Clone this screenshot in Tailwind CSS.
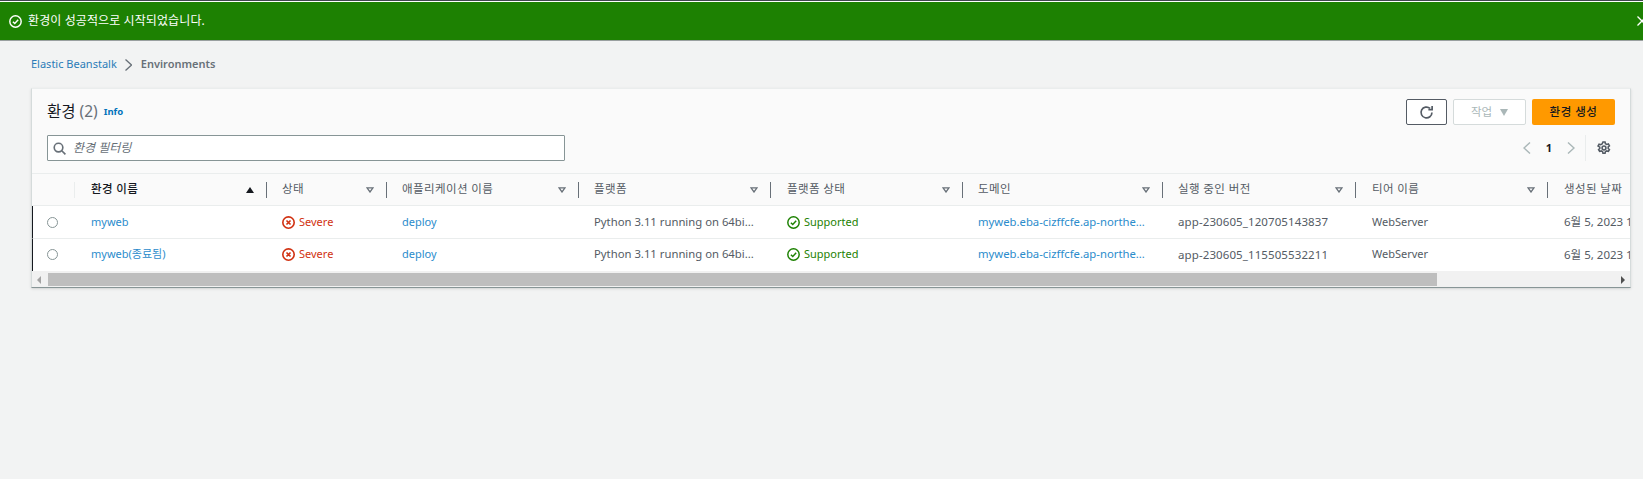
<!doctype html>
<html lang="ko">
  <head>
    <meta charset="UTF-8" />
    <title>Environments</title>
    <script src="https://cdn.jsdelivr.net/npm/@tailwindcss/browser@4"></script>
  </head>
  <body class="h-[479px] overflow-hidden bg-[#f2f3f3] font-['Noto_Sans','Noto_Sans_CJK_KR',sans-serif] text-[12px] text-[#545b64]">
    <div class="h-px bg-[#414750]"></div>
    <div class="h-px bg-white"></div>
    <div class="flex h-[39px] items-center justify-between overflow-hidden border-b border-[#9aa0a0] bg-[#1d8102] pl-[9px] text-white">
      <div class="flex items-center gap-[6px]">
        <svg class="h-[13px] w-[13px]" viewBox="0 0 16 16" fill="none" stroke="white" stroke-width="1.8"><circle cx="8" cy="8" r="7"/><path d="M4.8 8.2l2.3 2.3 4.2-4.6"/></svg>
        <span class="text-[12px] tracking-[0.1px]">환경이 성공적으로 시작되었습니다.</span>
      </div>
      <svg class="-mr-[4px] h-[10px] w-[10px] shrink-0" viewBox="0 0 10 10" fill="none" stroke="white" stroke-width="1.3"><path d="M0.5 0.5l9 9m0-9l-9 9"/></svg>
    </div>

    <nav class="flex h-[47px] items-center pl-[31px] text-[11px]">
      <a class="text-[#2b7cb8]">Elastic Beanstalk</a>
      <svg class="ml-[8px] mr-[9px] h-[12px] w-[7px]" viewBox="0 0 7 12" fill="none" stroke="#687078" stroke-width="1.3"><path d="M0.5 0.5l6 5.5-6 5.5"/></svg>
      <span class="font-semibold text-[#687078]">Environments</span>
    </nav>

    <section class="ml-[31px] mr-[12px] overflow-hidden border border-t-[#eaeded] border-r-[#d5dbdb] border-b-[#879596] border-l-[#d5dbdb] bg-[#fafafa] shadow-sm">
      <header class="relative h-[85px] border-b border-[#eaeded]">
        <div class="flex justify-between pl-[15px] pr-[15px] pt-[10px]">
          <div class="flex h-[26px] items-center gap-[6px]">
            <h1 class="text-[15.5px] text-[#16191f]">환경 <span class="text-[#687078]">(2)</span></h1>
            <a class="text-[9.5px] font-bold text-[#0073bb]">Info</a>
          </div>
          <div class="flex gap-[6px]">
            <button class="flex h-[26px] w-[41px] items-center justify-center rounded-[2px] border border-[#545b64] bg-white">
              <svg class="h-[15px] w-[15px]" viewBox="0 0 16 16" fill="none" stroke="#545b64" stroke-width="1.8"><path d="M13.8 8a5.8 5.8 0 1 1-2-4.4"/><path d="M14 1v4h-4"/></svg>
            </button>
            <button class="flex h-[26px] w-[73px] items-center justify-center gap-[8px] rounded-[2px] border border-[#d5dbdb] bg-white text-[11.5px] text-[#aab7b8]">
              작업
              <span class="h-0 w-0 border-x-[4.5px] border-t-[7px] border-x-transparent border-t-[#aab7b8]"></span>
            </button>
            <button class="h-[26px] w-[83px] rounded-[2px] bg-[#ff9900] text-[11.5px] font-medium tracking-[0.5px] text-[#16191f]">환경 생성</button>
          </div>
        </div>
        <div class="flex items-center justify-between pl-[15px] pr-[14px] pt-[10px]">
          <label class="flex h-[26px] w-[518px] items-center gap-[7px] rounded-[1px] border border-[#879596] bg-white pl-[5px]">
            <svg class="h-[13px] w-[13px]" viewBox="0 0 16 16" fill="none" stroke="#687078" stroke-width="2"><circle cx="6.8" cy="6.8" r="5.3"/><path d="M10.8 10.8l4.5 4.5"/></svg>
            <span class="text-[12px] italic text-[#687078]">환경 필터링</span>
          </label>
          <div class="flex h-[26px] items-center">
            <svg class="h-[12px] w-[8px]" viewBox="0 0 8 12" fill="none" stroke="#aab7b8" stroke-width="1.4"><path d="M7 0.5L1 6l6 5.5"/></svg>
            <span class="w-[36px] text-center text-[11px] font-bold text-[#16191f]">1</span>
            <svg class="h-[12px] w-[8px]" viewBox="0 0 8 12" fill="none" stroke="#aab7b8" stroke-width="1.4"><path d="M1 0.5L7 6l-6 5.5"/></svg>
            <div class="ml-[10px] h-[26px] border-l border-[#eaeded]"></div>
            <svg class="ml-[11px] mr-[5px] h-[14px] w-[14px]" viewBox="0 0 16 16" fill="none" stroke="#545b64" stroke-width="1.8"><circle cx="8" cy="8" r="2.2"/><path d="M6.8 1.2h2.4l.4 1.8 1.6.9 1.8-.6 1.2 2.1-1.4 1.3v1.8l1.4 1.3-1.2 2.1-1.8-.6-1.6.9-.4 1.8H6.8l-.4-1.8-1.6-.9-1.8.6-1.2-2.1 1.4-1.3V7.1L1.2 5.8l1.2-2.1 1.8.6 1.6-.9z"/></svg>
          </div>
        </div>
      </header>

      <div class="grid h-[32px] grid-cols-[42px_192px_120px_192px_192px_192px_200px_193px_192px_83px] items-center border-b border-l border-b-[#eaeded] border-l-transparent text-[11.5px] tracking-[0.4px]">
        <div class="h-[16px] border-r border-[#eaeded]"></div>
        <div class="flex h-[16px] items-center justify-between border-r border-[#687078] pb-[2px] pl-[16px] pr-[12px] font-medium text-[#16191f]">환경 이름<span class="mt-[2px] h-0 w-0 border-x-[4.5px] border-b-[6px] border-x-transparent border-b-[#16191f]"></span></div>
        <div class="flex h-[16px] items-center justify-between border-r border-[#687078] pb-[2px] pl-[15px] pr-[12px]">상태<svg class="mt-[2px] h-[6px] w-[8px]" viewBox="0 0 8 6" fill="none" stroke="#687078" stroke-width="1.3"><path d="M1 0.8h6L4 5z"/></svg></div>
        <div class="flex h-[16px] items-center justify-between border-r border-[#687078] pb-[2px] pl-[15px] pr-[12px]">애플리케이션 이름<svg class="mt-[2px] h-[6px] w-[8px]" viewBox="0 0 8 6" fill="none" stroke="#687078" stroke-width="1.3"><path d="M1 0.8h6L4 5z"/></svg></div>
        <div class="flex h-[16px] items-center justify-between border-r border-[#687078] pb-[2px] pl-[15px] pr-[12px]">플랫폼<svg class="mt-[2px] h-[6px] w-[8px]" viewBox="0 0 8 6" fill="none" stroke="#687078" stroke-width="1.3"><path d="M1 0.8h6L4 5z"/></svg></div>
        <div class="flex h-[16px] items-center justify-between border-r border-[#687078] pb-[2px] pl-[16px] pr-[12px]">플랫폼 상태<svg class="mt-[2px] h-[6px] w-[8px]" viewBox="0 0 8 6" fill="none" stroke="#687078" stroke-width="1.3"><path d="M1 0.8h6L4 5z"/></svg></div>
        <div class="flex h-[16px] items-center justify-between border-r border-[#687078] pb-[2px] pl-[15px] pr-[12px]">도메인<svg class="mt-[2px] h-[6px] w-[8px]" viewBox="0 0 8 6" fill="none" stroke="#687078" stroke-width="1.3"><path d="M1 0.8h6L4 5z"/></svg></div>
        <div class="flex h-[16px] items-center justify-between border-r border-[#687078] pb-[2px] pl-[15px] pr-[12px]">실행 중인 버전<svg class="mt-[2px] h-[6px] w-[8px]" viewBox="0 0 8 6" fill="none" stroke="#687078" stroke-width="1.3"><path d="M1 0.8h6L4 5z"/></svg></div>
        <div class="flex h-[16px] items-center justify-between border-r border-[#687078] pb-[2px] pl-[16px] pr-[12px]">티어 이름<svg class="mt-[2px] h-[6px] w-[8px]" viewBox="0 0 8 6" fill="none" stroke="#687078" stroke-width="1.3"><path d="M1 0.8h6L4 5z"/></svg></div>
        <div class="whitespace-nowrap pb-[2px] pl-[16px]">생성된 날짜</div>
      </div>

      <div class="grid h-[33px] grid-cols-[42px_192px_120px_192px_192px_192px_200px_193px_192px_83px] items-center border-b border-l border-b-[#eaeded] border-l-[#16191f] bg-white text-[11px]">
        <div class="pl-[14px]"><span class="block h-[11px] w-[11px] rounded-full border border-[#879596]"></span></div>
        <a class="pl-[16px] text-[#2b8ccc]">myweb</a>
        <div class="flex items-center gap-[4px] pl-[15px] text-[#d13212]"><svg class="h-[13px] w-[13px]" viewBox="0 0 16 16" fill="none" stroke="#d13212" stroke-width="2"><circle cx="8" cy="8" r="7"/><path d="M5.5 5.5l5 5m0-5l-5 5"/></svg>Severe</div>
        <a class="pl-[15px] text-[#2b8ccc]">deploy</a>
        <div class="whitespace-nowrap pl-[15px] text-[11.3px]">Python 3.11 running on 64bi...</div>
        <div class="flex items-center gap-[4px] pl-[16px] text-[#1d8102]"><svg class="h-[13px] w-[13px]" viewBox="0 0 16 16" fill="none" stroke="#1d8102" stroke-width="1.8"><circle cx="8" cy="8" r="7"/><path d="M4.8 8.2l2.3 2.3 4.2-4.6"/></svg>Supported</div>
        <a class="whitespace-nowrap pl-[15px] text-[11.3px] text-[#2b8ccc]">myweb.eba-cizffcfe.ap-northe...</a>
        <div class="pl-[15px] text-[11.5px] tracking-[0.1px]">app-230605_120705143837</div>
        <div class="pl-[16px]">WebServer</div>
        <div class="whitespace-nowrap pl-[16px] text-[11.5px]">6월 5, 2023 12:07</div>
      </div>
      <div class="grid h-[32px] grid-cols-[42px_192px_120px_192px_192px_192px_200px_193px_192px_83px] items-center border-l border-l-[#16191f] bg-white pb-[1px] text-[11px]">
        <div class="pl-[14px]"><span class="block h-[11px] w-[11px] rounded-full border border-[#879596]"></span></div>
        <a class="pl-[16px] text-[#2b8ccc]">myweb(종료됨)</a>
        <div class="flex items-center gap-[4px] pl-[15px] text-[#d13212]"><svg class="h-[13px] w-[13px]" viewBox="0 0 16 16" fill="none" stroke="#d13212" stroke-width="2"><circle cx="8" cy="8" r="7"/><path d="M5.5 5.5l5 5m0-5l-5 5"/></svg>Severe</div>
        <a class="pl-[15px] text-[#2b8ccc]">deploy</a>
        <div class="whitespace-nowrap pl-[15px] text-[11.3px]">Python 3.11 running on 64bi...</div>
        <div class="flex items-center gap-[4px] pl-[16px] text-[#1d8102]"><svg class="h-[13px] w-[13px]" viewBox="0 0 16 16" fill="none" stroke="#1d8102" stroke-width="1.8"><circle cx="8" cy="8" r="7"/><path d="M4.8 8.2l2.3 2.3 4.2-4.6"/></svg>Supported</div>
        <a class="whitespace-nowrap pl-[15px] text-[11.3px] text-[#2b8ccc]">myweb.eba-cizffcfe.ap-northe...</a>
        <div class="pl-[15px] text-[11.5px] tracking-[0.1px]">app-230605_115505532211</div>
        <div class="pl-[16px]">WebServer</div>
        <div class="whitespace-nowrap pl-[16px] text-[11.5px]">6월 5, 2023 11:55</div>
      </div>

      <div class="flex h-[16px] items-center bg-[#f1f1f1] pt-[1px]">
        <span class="ml-[5px] h-0 w-0 border-y-[4px] border-r-[4px] border-y-transparent border-r-[#a3a3a3]"></span>
        <div class="ml-[7px] h-[13px] w-[1389px] bg-[#bebebe]"></div>
        <span class="ml-auto mr-[5px] h-0 w-0 border-y-[4px] border-l-[4px] border-y-transparent border-l-[#505050]"></span>
      </div>
    </section>
  </body>
</html>
